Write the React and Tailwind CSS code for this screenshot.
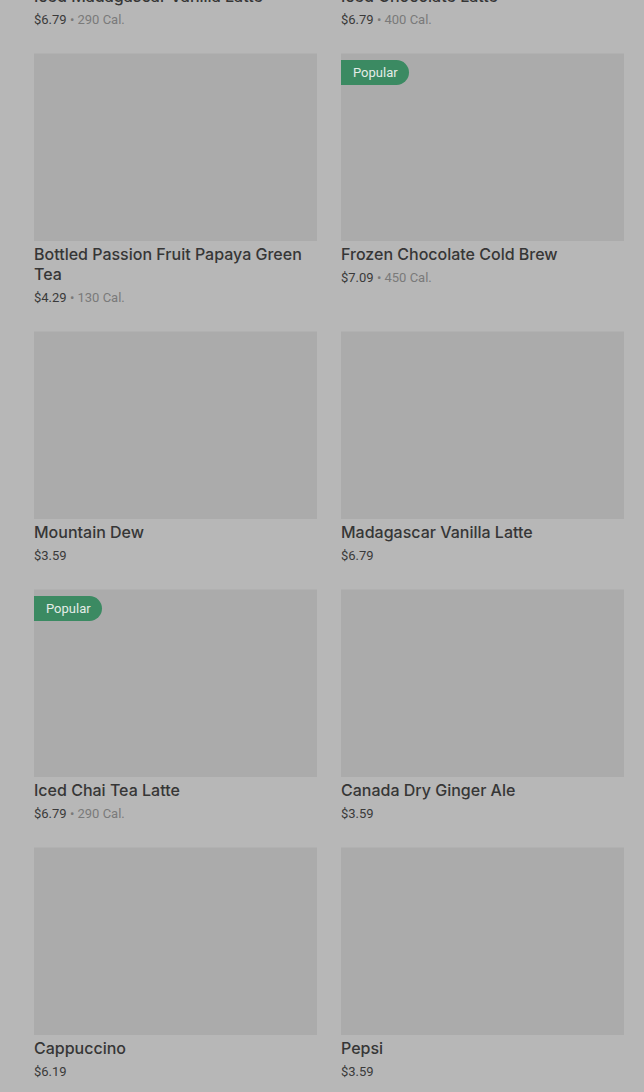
const items = [
  { name: 'Iced Madagascar Vanilla Latte', price: '$6.79', cal: '290 Cal.' },
  { name: 'Iced Chocolate Latte', price: '$6.79', cal: '400 Cal.' },
  { name: 'Bottled Passion Fruit Papaya Green Tea', price: '$4.29', cal: '130 Cal.' },
  { name: 'Frozen Chocolate Cold Brew', price: '$7.09', cal: '450 Cal.', popular: true },
  { name: 'Mountain Dew', price: '$3.59' },
  { name: 'Madagascar Vanilla Latte', price: '$6.79' },
  { name: 'Iced Chai Tea Latte', price: '$6.79', cal: '290 Cal.', popular: true },
  { name: 'Canada Dry Ginger Ale', price: '$3.59' },
  { name: 'Cappuccino', price: '$6.19' },
  { name: 'Pepsi', price: '$3.59' },
]

function Card({ item }) {
  return (
    <div className="flex flex-col">
      <div className="relative h-[188px] bg-[#ababab] border-t border-[#b1b1b1]">
        {item.popular && (
          <span className="absolute left-0 top-[6px] h-[25px] pl-3 pr-[11px] flex items-center rounded-r-full bg-[#3b8a62] text-[#e4ece7] text-[13px]">
            Popular
          </span>
        )}
      </div>
      <div className="pt-[3px] text-[16px] leading-5 font-medium text-[#363636]" style={{ fontFamily: "Inter, Roboto, sans-serif" }}>
        {item.name}
      </div>
      <div className="mt-[5px] mb-[-1px] text-[13px] leading-[18px]">
        <span className="text-[#3a3a3a]">{item.price}</span>
        {item.cal && <span className="text-[#7a7a7a]"> • {item.cal}</span>}
      </div>
    </div>
  )
}

export default function App() {
  return (
    <div className="h-[1092px] overflow-hidden bg-[#b7b7b7]" style={{ fontFamily: "Roboto, 'Noto Sans', sans-serif" }}>
      <div className="mt-[-205px] pl-[34px] pr-[20px] grid grid-cols-2 gap-x-6 gap-y-[25px]">
        {items.map((it) => <Card key={it.name} item={it} />)}
      </div>
    </div>
  )
}
